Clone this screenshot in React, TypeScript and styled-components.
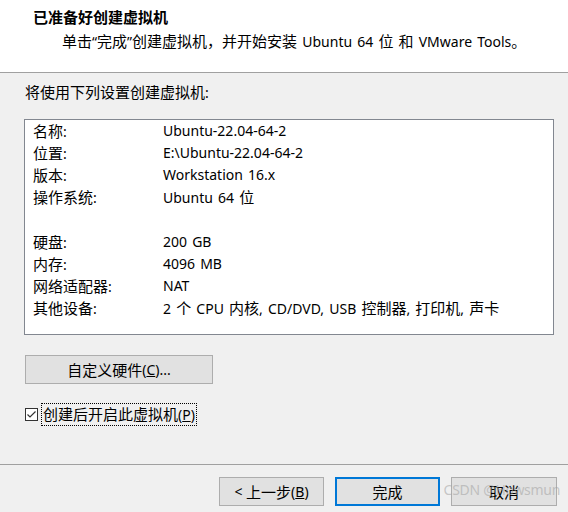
import React from "react";
import styled, { createGlobalStyle } from "styled-components";

const Global = createGlobalStyle`
  html, body { margin: 0; padding: 0; }
  body {
    width: 568px; height: 512px; overflow: hidden;
    background: #f0f0f0;
    font-family: "Noto Sans", "Noto Sans CJK SC", sans-serif;
    color: #000;
  }
`;

const Dialog = styled.div`
  width: 568px; height: 512px;
  display: flex; flex-direction: column;
  background: #f0f0f0;
  position: relative;
`;

const Header = styled.div`
  height: 73px;
  background: #fff;
  border-bottom: 1px solid #a0a0a0;
  box-sizing: border-box;
  padding: 6px 0 0 33px;
`;

const Title = styled.div`
  font-size: 15px; font-weight: 700; line-height: 22px;
  font-family: "Noto Sans CJK SC", sans-serif;
`;

const Subtitle = styled.div`
  font-size: 14px; line-height: 22px; margin: 2px 0 0 29px;
  word-spacing: 1.5px;
`;

const Cjk = styled.span`
  font-family: "Noto Sans CJK SC", sans-serif;
  font-size: 15px;
`;

const Body = styled.div`
  flex: 1;
  padding: 8px 0 0 25px;
  display: flex; flex-direction: column;
`;

const Intro = styled.div`
  font-size: 14px; line-height: 22px;
`;

const ListBox = styled.div`
  margin: 15px 0 0 -1px;
  width: 530px; height: 216px;
  box-sizing: border-box;
  background: #fff;
  border: 1px solid #828790;
  padding: 0 0 0 8px;
`;

const Row = styled.div<{ $gap?: boolean }>`
  display: grid;
  grid-template-columns: 130px 1fr;
  font-size: 14px; line-height: 22px; height: 22px;
  white-space: nowrap;
  word-spacing: 1.5px;
  margin-top: ${(p) => (p.$gap ? "23px" : "0")};
`;

const Button = styled.button<{ $w: number; $default?: boolean }>`
  width: ${(p) => p.$w}px; height: 29px;
  box-sizing: border-box;
  background: #e1e1e1;
  border: ${(p) => (p.$default ? "2px solid #0078d7" : "1px solid #adadad")};
  font: inherit; font-size: 14px; color: #000;
  padding: 0; cursor: default;
  display: flex; align-items: center; justify-content: center;
  white-space: pre;
`;

const CustomBtn = styled(Button)`
  margin-top: 20px;
`;

const CheckRow = styled.label`
  margin-top: 20px;
  display: flex; align-items: center; gap: 4px;
  font-size: 14px;
`;

const Box = styled.span`
  width: 13px; height: 13px; box-sizing: border-box;
  border: 1px solid #333; background: #fff;
  display: flex; align-items: center; justify-content: center;
`;

const FocusLabel = styled.span`
  outline: 1px dotted #000;
  padding: 0 1px;
  line-height: 20px;
`;

const Footer = styled.div`
  height: 48px;
  border-top: 1px solid #a0a0a0;
  box-sizing: border-box;
  display: flex; justify-content: flex-end; gap: 11px;
  padding: 12px 11px 0 0;
`;

const U = styled.span`text-decoration: underline;`;

const Watermark = styled.div`
  position: absolute; right: 8px; bottom: 13px;
  font-size: 14px; color: rgba(160,160,160,0.55);
  font-family: "Noto Sans", sans-serif; letter-spacing: -0.3px;
`;

const CJK_RE = /([\u3000-\u303f\u4e00-\u9fff\uff00-\uffef]+)/;

function T({ children }: { children: string }) {
  const parts = children.split(CJK_RE);
  return (
    <>
      {parts.map((p, i) =>
        p === "" ? null : CJK_RE.test(p) ? <Cjk key={i}>{p}</Cjk> : <React.Fragment key={i}>{p}</React.Fragment>
      )}
    </>
  );
}

const rows: [string, string, boolean?][] = [
  ["名称:", "Ubuntu-22.04-64-2"],
  ["位置:", "E:\\Ubuntu-22.04-64-2"],
  ["版本:", "Workstation 16.x"],
  ["操作系统:", "Ubuntu 64 位"],
  ["硬盘:", "200 GB", true],
  ["内存:", "4096 MB"],
  ["网络适配器:", "NAT"],
  ["其他设备:", "2 个 CPU 内核, CD/DVD, USB 控制器, 打印机, 声卡"],
];

export default function App() {
  return (
    <>
      <Global />
      <Dialog>
        <Header>
          <Title>已准备好创建虚拟机</Title>
          <Subtitle>
            <T>{"单击“完成”创建虚拟机，并开始安装 Ubuntu 64 位 和 VMware Tools。"}</T>
          </Subtitle>
        </Header>
        <Body>
          <Intro><T>将使用下列设置创建虚拟机:</T></Intro>
          <ListBox>
            {rows.map(([k, v, g]) => (
              <Row key={k} $gap={g}>
                <span><T>{k}</T></span>
                <span><T>{v}</T></span>
              </Row>
            ))}
          </ListBox>
          <CustomBtn $w={188}><T>自定义硬件</T>(<U>C</U>)...</CustomBtn>
          <CheckRow>
            <Box>
              <svg width="11" height="11" viewBox="0 0 11 11">
                <path d="M1.5 5.5 L4 8 L9.5 2.5" fill="none" stroke="#333" strokeWidth="1.2" />
              </svg>
            </Box>
            <FocusLabel><T>创建后开启此虚拟机</T>(<U>P</U>)</FocusLabel>
          </CheckRow>
        </Body>
        <Footer>
          <Button $w={105}>{"< "}<T>上一步</T>(<U>B</U>)</Button>
          <Button $w={105} $default><T>完成</T></Button>
          <Button $w={106}><T>取消</T></Button>
        </Footer>
        <Watermark>CSDN @Howsmun</Watermark>
      </Dialog>
    </>
  );
}
